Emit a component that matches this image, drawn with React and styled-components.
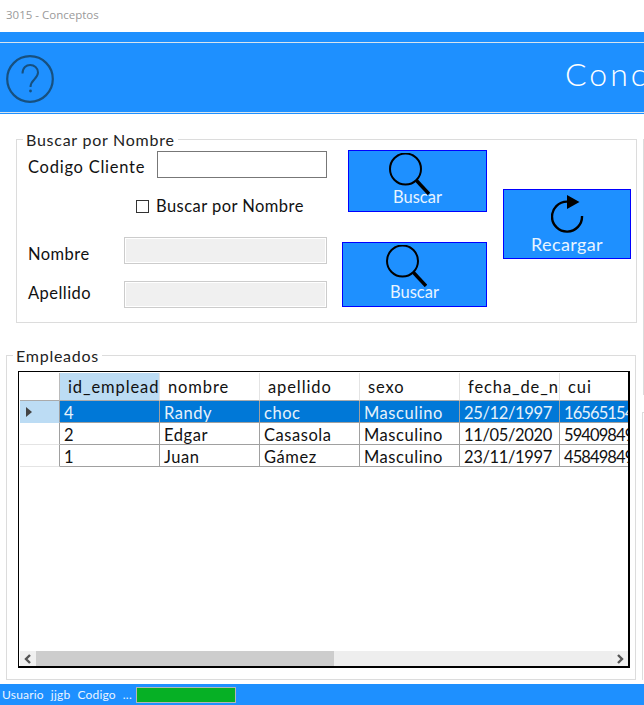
import { createGlobalStyle } from "styled-components"
import styled from "styled-components"

const GlobalStyle = createGlobalStyle`
    html, body {
        margin: 0;
        padding: 0;
        background: #fff;
    }
    body {
        width: 644px;
        height: 705px;
        overflow: hidden;
        font-family: "Lato", "Open Sans", sans-serif;
        color: #111;
    }
`

const columns = ["id_empleado", "nombre", "apellido", "sexo", "fecha_de_nacimiento", "cui"]
const rows = [
    { id: "4", nombre: "Randy", apellido: "choc", sexo: "Masculino", fecha: "25/12/1997", cui: "1656515478", selected: true },
    { id: "2", nombre: "Edgar", apellido: "Casasola", sexo: "Masculino", fecha: "11/05/2020", cui: "5940984912" },
    { id: "1", nombre: "Juan", apellido: "Gámez", sexo: "Masculino", fecha: "23/11/1997", cui: "4584984921" },
]

const SearchIcon = () => (
    <IconLeft width="41" height="42" viewBox="0 0 41 42" fill="none" stroke="#000">
        <circle cx="16.5" cy="16" r="15.5" strokeWidth="2" />
        <path d="M27.5 27.5 L40 41" strokeWidth="3.4" />
    </IconLeft>
)

const ReloadIcon = () => (
    <svg width="33" height="38" viewBox="0 0 33 38" fill="none">
        <path d="M31 21 A15 15 0 1 1 16 6.6" stroke="#000" strokeWidth="2.4" />
        <path d="M16 0 L28.5 7 L16 14 Z" fill="#000" />
    </svg>
)

const App = () => {
    return (
        <>
            <GlobalStyle />
            <TitleBar>3015 - Conceptos</TitleBar>
            <Header>
                <HeaderInner>
                    <HelpIcon>
                        <svg width="48" height="48" viewBox="0 0 48 48" fill="none" stroke="#17507f" strokeWidth="2.2">
                            <circle cx="24" cy="24" r="22.8" />
                            <path d="M16.5 18.5 C16.5 6.5 32 8 32 17.5 C32 24 24.5 24.5 24.5 32" strokeWidth="2" />
                            <circle cx="24.5" cy="36" r="1.4" fill="#17507f" stroke="none" />
                        </svg>
                    </HelpIcon>
                    <Title>Conceptos</Title>
                </HeaderInner>
            </Header>
            <Body>
                <MainColumn>
                    <SearchGroup>
                        <Legend>Buscar por Nombre</Legend>
                        <FormColumn>
                            <CodeRow>
                                <label>Codigo Cliente</label>
                                <CodeInput />
                            </CodeRow>
                            <CheckRow>
                                <CheckBox />
                                Buscar por Nombre
                            </CheckRow>
                            <NameRow>
                                <label>Nombre</label>
                                <DisabledInput />
                            </NameRow>
                            <NameRow $second>
                                <label>Apellido</label>
                                <DisabledInput />
                            </NameRow>
                        </FormColumn>
                        <ButtonColumn>
                            <ActionButton $width={139} $height={62} $labelGap={-7}>
                                <SearchIcon />
                                <span>Buscar</span>
                            </ActionButton>
                            <ActionButton $width={145} $height={65} $labelGap={-4}>
                                <SearchIcon />
                                <span>Buscar</span>
                            </ActionButton>
                        </ButtonColumn>
                        <ReloadButton $width={128} $height={70} $labelGap={2}>
                            <ReloadIcon />
                            <span>Recargar</span>
                        </ReloadButton>
                    </SearchGroup>
                    <EmployeesGroup>
                        <Legend>Empleados</Legend>
                        <GridView>
                            <TableArea>
                                <HeaderRow>
                                    <CornerCell />
                                    {columns.map((col, i) => (
                                        <ColumnHead key={col} $active={i === 0}>{col}</ColumnHead>
                                    ))}
                                </HeaderRow>
                                {rows.map(row => (
                                    <DataRow key={row.id}>
                                        <RowHead $selected={row.selected}>
                                            {row.selected && <Arrow />}
                                        </RowHead>
                                        <Cell $selected={row.selected} $spacing={-0.35}>{row.id}</Cell>
                                        <Cell $selected={row.selected}>{row.nombre}</Cell>
                                        <Cell $selected={row.selected}>{row.apellido}</Cell>
                                        <Cell $selected={row.selected}>{row.sexo}</Cell>
                                        <Cell $selected={row.selected} $spacing={-0.35}>{row.fecha}</Cell>
                                        <Cell $selected={row.selected} $spacing={-0.9}>{row.cui}</Cell>
                                    </DataRow>
                                ))}
                            </TableArea>
                            <ScrollBar>
                                <ScrollButton>
                                    <svg width="8" height="10" viewBox="0 0 8 10" fill="none" stroke="#555" strokeWidth="2.4">
                                        <path d="M6 1 L2 5 L6 9" />
                                    </svg>
                                </ScrollButton>
                                <ScrollTrack>
                                    <ScrollThumb />
                                </ScrollTrack>
                                <ScrollButton>
                                    <svg width="8" height="10" viewBox="0 0 8 10" fill="none" stroke="#555" strokeWidth="2.4">
                                        <path d="M2 1 L6 5 L2 9" />
                                    </svg>
                                </ScrollButton>
                            </ScrollBar>
                        </GridView>
                    </EmployeesGroup>
                </MainColumn>
                <SideColumn>
                    <SidePanel $top={25} $left={1} $height={256} />
                    <SidePanel $top={17} $left={0} $height={268} />
                </SideColumn>
            </Body>
            <StatusBar>
                <StatusText>Usuario</StatusText>
                <StatusText>jjgb</StatusText>
                <StatusText>Codigo</StatusText>
                <StatusText>...</StatusText>
                <Progress />
            </StatusBar>
        </>
    )
}

const TitleBar = styled.div`
    height: 32px;
    box-sizing: border-box;
    padding: 7px 0 0 6px;
    font-family: "Open Sans", sans-serif;
    font-size: 11.5px;
    line-height: 15px;
    color: #9a9a9a;
`

const Header = styled.div`
    height: 82px;
    box-sizing: border-box;
    padding-top: 10px;
    background: #1e90ff;
    overflow: hidden;
`

const HeaderInner = styled.div`
    height: 71px;
    box-sizing: border-box;
    border-top: 1px solid #d8e4ee;
    border-bottom: 1px solid #d8e4ee;
    display: flex;
    align-items: center;
    padding-left: 6px;
`

const HelpIcon = styled.div`
    width: 48px;
    height: 48px;
    margin-top: 3px;
`

const Title = styled.div`
    margin-left: 511px;
    margin-top: -8px;
    font-size: 32px;
    font-weight: 300;
    letter-spacing: 3px;
    color: #fff;
    white-space: nowrap;
`

const Body = styled.div`
    display: flex;
    height: 566px;
`

const MainColumn = styled.div`
    width: 642px;
    flex: none;
`

const SideColumn = styled.div`
    flex: 1;
    display: flex;
    flex-direction: column;
`

const SidePanel = styled.div`
    height: ${props => props.$height}px;
    margin: ${props => props.$top}px 0 0 ${props => props.$left}px;
    box-sizing: border-box;
    border-top: 1px solid #dcdcdc;
    border-left: 1px solid #dcdcdc;
`

const Group = styled.fieldset`
    margin: 0;
    padding: 0;
    min-width: 0;
    box-sizing: border-box;
    border: 1px solid #dcdcdc;
`

const Legend = styled.legend`
    padding: 2px 3px 0;
    margin-left: 6px;
    font-size: 16px;
    line-height: 16px;
    letter-spacing: 0.75px;
    color: #222;
`

const SearchGroup = styled(Group)`
    width: 621px;
    height: 193px;
    margin: 16px 0 0 16px;
    display: flex;
    align-items: flex-start;
`

const FormColumn = styled.div`
    width: 310px;
    padding-top: 3px;
    font-size: 16.5px;
    letter-spacing: 0.45px;
`

const CodeRow = styled.div`
    display: flex;
    align-items: center;
    margin-left: 11px;
    label {
        width: 129px;
        padding-top: 4px;
        letter-spacing: 0.75px;
    }
`

const CodeInput = styled.div`
    width: 170px;
    height: 27px;
    box-sizing: border-box;
    border: 1px solid #777;
    background: #fff;
`

const CheckRow = styled.div`
    display: flex;
    align-items: center;
    margin: 18px 0 0 119px;
    height: 20px;
    gap: 7px;
`

const CheckBox = styled.div`
    width: 13px;
    height: 13px;
    box-sizing: border-box;
    border: 1px solid #333;
`

const NameRow = styled.div`
    display: flex;
    align-items: center;
    margin: ${props => props.$second ? "17px" : "21px"} 0 0 11px;
    label {
        width: 96px;
        padding-top: ${props => props.$second ? "0" : "6px"};
        padding-bottom: ${props => props.$second ? "4px" : "0"};
    }
`

const DisabledInput = styled.div`
    width: 203px;
    height: 27px;
    box-sizing: border-box;
    border: 1px solid #ccc;
    box-shadow: inset 0 0 0 1px #fff;
    background: #f0f0f0;
`

const ButtonColumn = styled.div`
    width: 160px;
    display: flex;
    flex-direction: column;
    align-items: flex-end;
    gap: 30px;
    padding-top: 2px;
    box-sizing: border-box;
`

const ActionButton = styled.div`
    width: ${props => props.$width}px;
    height: ${props => props.$height}px;
    box-sizing: border-box;
    border: 1px solid #0000ff;
    background: #1e90ff;
    display: flex;
    flex-direction: column;
    align-items: center;
    color: #e8f4ff;
    font-size: 16.5px;
    line-height: 18px;
    padding-top: 2px;
    overflow: hidden;
    span {
        margin-top: ${props => props.$labelGap}px;
        position: relative;
    }
`

const IconLeft = styled.svg`
    flex: none;
    margin-right: 16px;
`

const ReloadButton = styled(ActionButton)`
    margin: 41px 0 0 16px;
    padding-top: 5px;
    font-size: 18px;
    letter-spacing: 0.4px;
`

const EmployeesGroup = styled(Group)`
    width: 630px;
    height: 334px;
    margin: 23px 0 0 6px;
`

const GridView = styled.div`
    width: 612px;
    height: 297px;
    margin: 7px 0 0 11px;
    box-sizing: border-box;
    border: 1px solid #000;
    border-width: 1px 2px 2px 1px;
    padding: 1px 0 0 1px;
    display: flex;
    flex-direction: column;
    overflow: hidden;
`

const TableArea = styled.div`
    flex: 1;
    overflow: hidden;
    font-size: 16.5px;
`

const HeaderRow = styled.div`
    display: flex;
    height: 28px;
`

const DataRow = styled.div`
    display: flex;
    height: 22px;
`

const CornerCell = styled.div`
    width: 40px;
    flex: none;
    box-sizing: border-box;
    border-right: 1px solid #bbb;
    border-bottom: 1px solid #aaa;
`

const ColumnHead = styled.div`
    width: 100px;
    flex: none;
    box-sizing: border-box;
    padding: 4px 0 0 8px;
    line-height: 21px;
    letter-spacing: 0.9px;
    white-space: nowrap;
    overflow: hidden;
    background: ${props => props.$active ? "#bcdcf4" : "#fff"};
    border-right: 1px solid #e4e4e4;
    border-bottom: 1px solid #aaa;
`

const RowHead = styled.div`
    width: 40px;
    flex: none;
    box-sizing: border-box;
    border-right: 1px solid #a0a0a0;
    border-bottom: 1px solid ${props => props.$selected ? "#bcdcf4" : "#e4e4e4"};
    background: ${props => props.$selected ? "#bcdcf4" : "#fff"};
    display: flex;
    align-items: center;
    padding-left: 6px;
`

const Arrow = styled.div`
    width: 0;
    height: 0;
    border-left: 6px solid #444;
    border-top: 5px solid transparent;
    border-bottom: 5px solid transparent;
`

const Cell = styled.div`
    width: 100px;
    flex: none;
    box-sizing: border-box;
    padding: 2px 0 0 4px;
    line-height: 21px;
    white-space: nowrap;
    overflow: hidden;
    letter-spacing: ${props => props.$spacing ?? 0.55}px;
    color: ${props => props.$selected ? "#e6f2fb" : "#111"};
    background: ${props => props.$selected ? "#0078d7" : "#fff"};
    border-right: 1px solid #a0a0a0;
    border-bottom: 1px solid #a0a0a0;
`

const ScrollBar = styled.div`
    height: 15px;
    display: flex;
    flex: none;
    background: #eee;
`

const ScrollButton = styled.div`
    width: 16px;
    flex: none;
    background: #f0f0f0;
    display: flex;
    align-items: center;
    justify-content: center;
`

const ScrollTrack = styled.div`
    flex: 1;
`

const ScrollThumb = styled.div`
    width: 298px;
    height: 100%;
    background: #cdcdcd;
`

const StatusBar = styled.div`
    height: 21px;
    margin-top: 4px;
    background: #1e90ff;
    display: flex;
    align-items: center;
    padding-left: 2px;
    gap: 7px;
`

const StatusText = styled.span`
    font-size: 12px;
    letter-spacing: 0.2px;
    color: #eaf4ff;
`

const Progress = styled.div`
    width: 100px;
    height: 16px;
    margin: 1px 0 0 -3px;
    box-sizing: border-box;
    border: 1px solid #b5b5b5;
    background: #06b025;
`

export default App
